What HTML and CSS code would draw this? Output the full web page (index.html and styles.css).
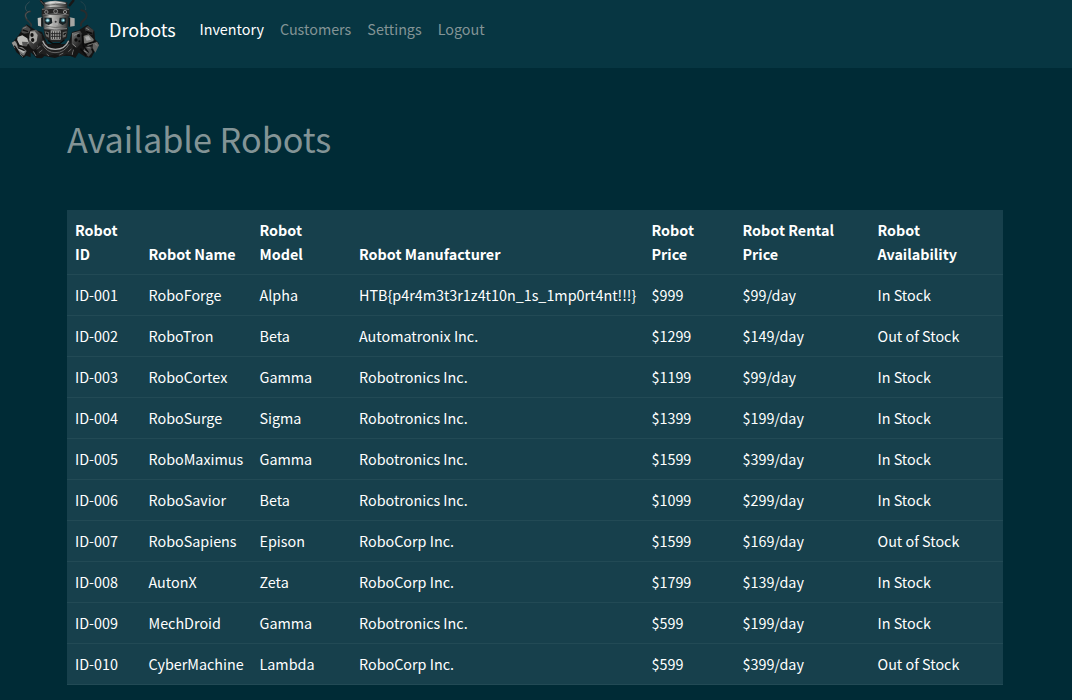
FILE: index.html
```
<!DOCTYPE html>
<html lang="en">
<head>
<meta charset="utf-8">
<title>Drobots</title>
<link rel="stylesheet" href="styles.css">
</head>
<body>
<nav class="navbar">
  <svg class="logo" viewBox="30 0 270 180" aria-hidden="true">
    <defs>
      <linearGradient id="steel" x1="0" x2="1" y1="0" y2="0">
        <stop offset="0" stop-color="#333"/><stop offset=".28" stop-color="#c8c8c5"/><stop offset=".65" stop-color="#858583"/><stop offset="1" stop-color="#222"/>
      </linearGradient>
      <linearGradient id="armor" x1="0" x2="1" y1="0" y2="1">
        <stop offset="0" stop-color="#8b8b89"/><stop offset=".45" stop-color="#414141"/><stop offset="1" stop-color="#101010"/>
      </linearGradient>
    </defs>
    <g fill="none" stroke-linecap="round">
      <path d="M88 6C75 15 72 27 82 34" stroke="#3d5259" stroke-width="2.5"/>
      <path d="M91 34C76 36 72 46 79 57C85 66 95 68 94 78" stroke="#303638" stroke-width="5"/>
      <path d="M88 34C76 38 74 46 80 55" stroke="#777" stroke-width="1.5"/>
      <path d="M244 31C259 33 263 43 258 53C251 64 241 64 243 77" stroke="#292c2d" stroke-width="6"/>
      <path d="M243 5C254 11 258 20 257 29" stroke="#2a454d" stroke-width="2.5"/>
      <path d="M123 3L135 17M220 2L209 16" stroke="#171717" stroke-width="7"/>
      <path d="M122 3L131 13" stroke="#888" stroke-width="2"/>
    </g>
    <path d="M66 88L80 73L106 90L126 96L142 132L205 132L216 96L236 91L262 74L283 93L285 118L297 130L274 173L258 172L236 158L226 174L211 168L184 167L165 174L133 168L126 175L110 174L92 157L92 172L79 167L70 174L49 157L36 130L58 103Z" fill="#151515"/>
    <!-- left arm -->
    <path d="M66 84L79 76L92 87L86 99L70 101L64 96Z" fill="#494949"/>
    <path d="M91 93L108 89L124 103L128 120L117 143L98 150L84 130Z" fill="url(#armor)"/>
    <path d="M90 96L104 94L113 105L110 124L100 131L88 120Z" fill="#a6a6a3"/>
    <path d="M53 111L67 106L82 115L86 129L76 139L60 136L50 127Z" fill="#bbbbb8"/>
    <path d="M66 125L84 126L81 139L68 138Z" fill="#555"/>
    <path d="M35 128L45 122L51 132L55 148L43 143Z" fill="#969693"/>
    <path d="M48 140L67 141L80 153L72 167L56 158Z" fill="#777"/>
    <path d="M51 144L69 148L76 154L70 160L57 151Z" fill="#b6b6b3"/>
    <path d="M58 104L69 102L87 115M49 119L57 136L82 145M43 137L58 160M54 143L74 152M68 90L84 95M93 147L111 158" fill="none" stroke="#111" stroke-width="4"/>
    <path d="M69 85L79 81M60 162L69 170M100 154L108 168M112 138L123 148" stroke="#888" stroke-width="2.5"/>
    <g fill="#111"><ellipse cx="96" cy="105" rx="5" ry="6"/><ellipse cx="98" cy="120" rx="5" ry="6"/></g>
    <!-- right arm -->
    <path d="M216 99L240 92L248 104L245 129L230 145L215 133Z" fill="url(#armor)"/>
    <path d="M254 84L264 77L281 91L277 105L259 99Z" fill="#3d3d3d"/>
    <path d="M250 108L266 103L281 118L279 132L264 137L251 128Z" fill="#777774"/>
    <path d="M255 110L266 108L273 119L260 122Z" fill="#aaa"/>
    <path d="M279 124L292 126L297 136L286 158L278 145Z" fill="#656563"/>
    <path d="M253 141L276 139L282 151L266 170L250 157Z" fill="#494949"/>
    <path d="M247 103L250 137L265 158M258 95L277 101M255 134L287 124M241 146L259 166M272 140L281 157" fill="none" stroke="#0b0b0b" stroke-width="5"/>
    <path d="M258 84L268 90M262 143L275 144M284 130L292 137M251 152L263 158M222 106L236 100M218 132L228 141M220 149L216 165" stroke="#929290" stroke-width="2.5"/>
    <g fill="#0b0b0b"><circle cx="228" cy="120" r="5"/><circle cx="236" cy="107" r="5"/><circle cx="238" cy="124" r="3"/></g>
    <!-- torso -->
    <path d="M114 132L132 119L147 144H188L205 120L220 140L215 165L199 163L183 170L165 162L145 169L125 161L111 166Z" fill="#202020"/>
    <path d="M128 122Q137 147 166 148Q196 147 206 122" fill="none" stroke="#aaa" stroke-width="4"/>
    <path d="M127 133Q141 158 165 158Q193 158 207 133" fill="none" stroke="#666" stroke-width="3"/>
    <path d="M111 148L121 138M117 158L127 150M140 162L147 168M178 165L190 159M205 155L214 147" stroke="#777" stroke-width="2.5"/>
    <!-- head -->
    <path d="M132 7Q165-3 202 7V32H132Z" fill="url(#steel)"/>
    <path d="M136 10Q166 2 197 10" fill="none" stroke="#ddd" stroke-width="3"/>
    <path d="M134 17Q167 9 200 17" fill="none" stroke="#444" stroke-width="2"/>
    <path d="M125 26Q168 18 209 26V50Q166 43 125 50Z" fill="#242424"/>
    <path d="M126 28Q168 20 207 28M128 45Q168 37 206 45" fill="none" stroke="#888" stroke-width="2.5"/>
    <g fill="#333" stroke="#999" stroke-width="2.5"><circle cx="139" cy="36" r="5"/><circle cx="167" cy="34" r="6"/><circle cx="195" cy="36" r="5"/></g>
    <path d="M128 48Q168 40 206 48L202 86Q167 93 131 86Z" fill="url(#steel)"/>
    <path d="M113 54L125 52V80L114 77Z" fill="#c0c0bd"/><path d="M209 52L224 55V78L209 80Z" fill="#a6a6a3"/>
    <path d="M126 53V80M208 53V80" stroke="#161616" stroke-width="5"/>
    <path d="M133 53L155 53L157 69L146 75L134 70ZM179 53L199 53L198 69L188 75L177 69Z" fill="#172023"/>
    <g fill="#477d8b"><circle cx="143" cy="61" r="6.5"/><circle cx="189" cy="61" r="6"/></g>
    <g fill="#b9edf4"><circle cx="143" cy="61" r="3.5"/><circle cx="190" cy="61" r="3"/></g>
    <path d="M162 58H171L174 76H159Z" fill="#aaa"/>
    <circle cx="167" cy="65" r="3" fill="#333"/>
    <path d="M138 79Q166 86 197 79" fill="none" stroke="#555" stroke-width="2"/>
    <path d="M131 84Q166 91 204 84L201 113L184 126H151L134 113Z" fill="#222"/>
    <path d="M133 86Q166 91 201 86" fill="none" stroke="#bbb" stroke-width="2"/>
    <path d="M134 94L147 97V113L138 109ZM188 97L200 94L197 110L188 113Z" fill="#686866"/>
    <path d="M152 91H182V119H152Z" fill="#a8a8a5"/>
    <path d="M157 94V117M164 94V117M171 94V117M178 94V117M153 101H182M153 109H182" stroke="#222" stroke-width="2.8"/>
    <path d="M138 98L144 103M191 104L197 99M144 121L158 131H179L193 120" fill="none" stroke="#0b0b0b" stroke-width="4"/>
  </svg>
  <a class="brand">Drobots</a>
  <div class="links">
    <a class="link active">Inventory</a>
    <a class="link">Customers</a>
    <a class="link">Settings</a>
    <a class="link">Logout</a>
  </div>
</nav>
<main class="content">
  <h1 class="title">Available Robots</h1>
  <table class="robots">
    <colgroup><col class="c-id"><col class="c-name"><col class="c-model"><col class="c-maker"><col class="c-price"><col class="c-rental"><col class="c-stock"></colgroup>
    <thead>
      <tr><th>Robot<br>ID</th><th>Robot Name</th><th>Robot<br>Model</th><th>Robot Manufacturer</th><th>Robot<br>Price</th><th>Robot Rental<br>Price</th><th>Robot<br>Availability</th></tr>
    </thead>
    <tbody>
      <tr><td>ID-001</td><td>RoboForge</td><td>Alpha</td><td>HTB{p4r4m3t3r1z4t10n_1s_1mp0rt4nt!!!}</td><td>$999</td><td>$99/day</td><td>In Stock</td></tr>
      <tr><td>ID-002</td><td>RoboTron</td><td>Beta</td><td>Automatronix Inc.</td><td>$1299</td><td>$149/day</td><td>Out of Stock</td></tr>
      <tr><td>ID-003</td><td>RoboCortex</td><td>Gamma</td><td>Robotronics Inc.</td><td>$1199</td><td>$99/day</td><td>In Stock</td></tr>
      <tr><td>ID-004</td><td>RoboSurge</td><td>Sigma</td><td>Robotronics Inc.</td><td>$1399</td><td>$199/day</td><td>In Stock</td></tr>
      <tr><td>ID-005</td><td>RoboMaximus</td><td>Gamma</td><td>Robotronics Inc.</td><td>$1599</td><td>$399/day</td><td>In Stock</td></tr>
      <tr><td>ID-006</td><td>RoboSavior</td><td>Beta</td><td>Robotronics Inc.</td><td>$1099</td><td>$299/day</td><td>In Stock</td></tr>
      <tr><td>ID-007</td><td>RoboSapiens</td><td>Epison</td><td>RoboCorp Inc.</td><td>$1599</td><td>$169/day</td><td>Out of Stock</td></tr>
      <tr><td>ID-008</td><td>AutonX</td><td>Zeta</td><td>RoboCorp Inc.</td><td>$1799</td><td>$139/day</td><td>In Stock</td></tr>
      <tr><td>ID-009</td><td>MechDroid</td><td>Gamma</td><td>Robotronics Inc.</td><td>$599</td><td>$199/day</td><td>In Stock</td></tr>
      <tr><td>ID-010</td><td>CyberMachine</td><td>Lambda</td><td>RoboCorp Inc.</td><td>$599</td><td>$399/day</td><td>Out of Stock</td></tr>
    </tbody>
  </table>
</main>
</body>
</html>
```
FILE: styles.css
```
* { box-sizing: border-box; }
body {
  margin: 0;
  background: #002b36;
  color: #839496;
  font-family: "Noto Sans CJK SC", "Open Sans", sans-serif;
  font-size: 14.35px;
  line-height: 24px;
  overflow: hidden;
}
.navbar {
  display: flex;
  align-items: flex-start;
  height: 68px;
  padding-left: 10px;
  background: #073642;
}
.logo { width: 90px; height: 60px; flex: none; }
.brand { margin: 14px 23.5px 0 9px; width: 67px; color: #fff; font-size: 18px; line-height: 30px; white-space: nowrap; }
.links { display: flex; gap: 16px; margin-top: 17px; }
.link { color: #839496; }
.link.active { color: #fff; }
.content { padding: 46px 69px 0 67px; }
.title { margin: 0 0 48px; font-size: 34.2px; font-weight: 400; line-height: 48px; }
.robots { width: 936px; table-layout: fixed; border-collapse: separate; border-spacing: 0; background: #17404c; color: #fff; }
.robots th, .robots td { height: 41px; padding: 8px; border-bottom: 1px solid #224a55; text-align: left; vertical-align: bottom; white-space: nowrap; }
.robots th { font-weight: 700; }
.c-id { width: 73.5px; }
.c-name { width: 111px; }
.c-model { width: 99.5px; }
.c-maker { width: 292.5px; }
.c-price { width: 91px; }
.c-rental { width: 135px; }
.c-stock { width: 133.5px; }
```
